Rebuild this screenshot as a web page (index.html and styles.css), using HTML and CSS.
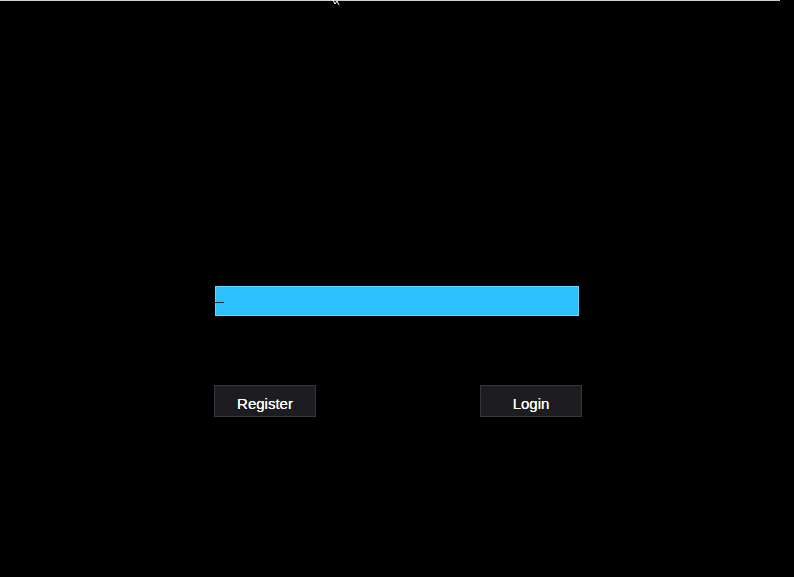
FILE: index.html
```html
<!DOCTYPE html>
<html>
<head>
<meta charset="utf-8">
<link rel="stylesheet" href="styles.css">
</head>
<body>
<div class="screen">
  <div class="topline"></div>
  <svg class="cursor-mark" width="8" height="6" viewBox="0 0 8 6"><path d="M1 0 L3 4 M3 4 L5 1 L7 5" stroke="#fff" stroke-width="1" fill="none"/></svg>
  <div class="form">
    <div class="field"><span class="caret"></span></div>
    <div class="actions">
      <button class="btn">Register</button>
      <button class="btn">Login</button>
    </div>
  </div>
</div>
</body>
</html>
```
FILE: styles.css
```css
html, body {
  margin: 0;
  padding: 0;
  background: #000;
}
.screen {
  position: relative;
  width: 794px;
  height: 577px;
  background: #000;
  overflow: hidden;
}
.topline {
  height: 1px;
  background: #cfcfcf;
  width: 780px;
}
.cursor-mark {
  position: absolute;
  left: 332px;
  top: 0;
}
.form {
  display: flex;
  flex-direction: column;
  width: 368px;
  margin-left: 214px;
  padding-top: 285px;
}
.field {
  position: relative;
  margin-left: 1px;
  width: 362px;
  height: 28px;
  background: #2dc0ff;
  border: 1px solid #62d9ff;
}
.caret {
  position: absolute;
  left: -1px;
  top: 15px;
  width: 9px;
  height: 1px;
  background: #10283a;
}
.actions {
  display: flex;
  justify-content: space-between;
  margin-top: 69px;
}
.btn {
  width: 102px;
  height: 32px;
  background: #1d1d21;
  border: 1px solid #38383c;
  color: #fff;
  font-family: "Liberation Sans", Arial, sans-serif;
  font-size: 15px;
  text-shadow: 0 0 0.6px #fff;
  padding: 4px 0 0 0;
  margin: 0;
}
```
